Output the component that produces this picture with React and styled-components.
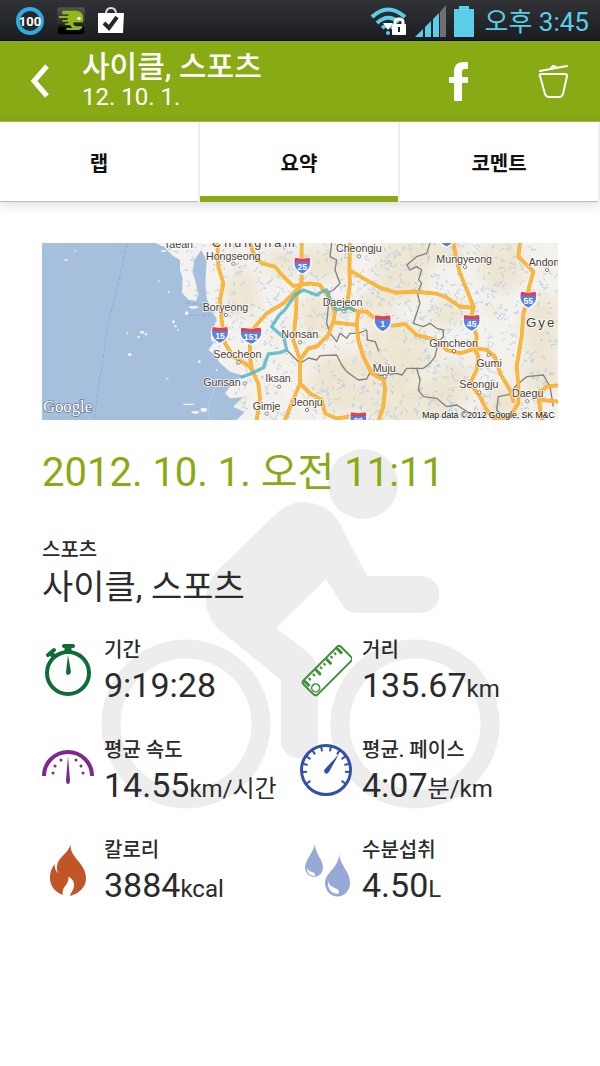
import React from "react";
import styled, { createGlobalStyle } from "styled-components";

const GREEN = "#88aa14";
const CYAN = "#5bcde8";

const GlobalStyle = createGlobalStyle`
  * {
    box-sizing: border-box;
  }
  body {
    margin: 0;
    background: #fff;
    color: #2b2b2b;
    font-family: Roboto, "Noto Sans CJK KR", sans-serif;
  }
  button {
    padding: 0;
    border: 0;
    background: none;
    font: inherit;
    color: inherit;
    cursor: pointer;
  }
  svg {
    display: block;
  }
`;

const StatusBar = styled.div`
  display: flex;
  align-items: center;
  justify-content: space-between;
  height: 41px;
  padding: 1px 11px 0 15px;
  background: linear-gradient(#303235, #1c1d22);
  border-bottom: 1px solid #0c0d0c;
`;

const StatusGroup = styled.div`
  display: flex;
  align-items: center;
  gap: ${(props) => props.$gap}px;
`;

const Clock = styled.span`
  margin-left: 4px;
  padding-top: 2px;
  color: ${CYAN};
  font-size: 26px;
  line-height: 36px;
`;

const Header = styled.header`
  display: flex;
  align-items: center;
  height: 81px;
  padding: 0 30px;
  background: ${GREEN};
  border-bottom: 1px solid #a9c254;
  color: #fff;
`;

const HeaderText = styled.div`
  flex: 1;
  margin-left: 32px;
  padding-bottom: 2px;
`;

const HeaderTitle = styled.h1`
  margin: 0;
  font-size: 30px;
  font-weight: 500;
  line-height: 34px;
`;

const HeaderDate = styled.div`
  font-size: 24px;
  line-height: 26px;
`;

const HeaderActions = styled.div`
  display: flex;
  align-items: center;
  gap: 66px;
`;

const Tabs = styled.nav`
  display: grid;
  grid-template-columns: repeat(3, 1fr);
  height: 80px;
  border-bottom: 1px solid #bdbdbd;
  box-shadow: 0 2px 12px rgba(0, 0, 0, 0.16);
`;

const Tab = styled.button`
  && {
    height: 80px;
    border-right: 2px solid #efefef;
    box-shadow: inset 0 -6px ${(props) => (props.$active ? GREEN : "transparent")};
    color: #111;
    font-size: 20px;
    font-weight: 700;
  }
`;

const Summary = styled.main`
  padding: 41px 42px 0;
`;

const Details = styled.section`
  position: relative;
  z-index: 0;
  padding-top: 28px;
`;

const Watermark = styled.svg`
  position: absolute;
  z-index: -1;
  top: 28px;
  left: 50%;
  width: 400px;
  margin-left: -200px;
`;

const StartTime = styled.h2`
  margin: 0;
  color: ${GREEN};
  font-size: 40px;
  font-weight: 400;
  line-height: 50px;
`;

const SportLabel = styled.div`
  margin-top: 38px;
  font-size: 20px;
  font-weight: 500;
  line-height: 28px;
`;

const SportName = styled.div`
  font-size: 34px;
  line-height: 46px;
`;

const Metrics = styled.div`
  display: grid;
  grid-template-columns: repeat(2, 1fr);
  grid-auto-rows: 100px;
  margin-top: 26px;
`;

const Metric = styled.div`
  display: grid;
  grid-template-columns: 52px 1fr;
  gap: 10px;
  align-items: start;
  white-space: nowrap;
`;

const MetricIcon = styled.svg`
  width: 52px;
  height: 64px;
`;

const MetricLabel = styled.div`
  font-size: 20px;
  font-weight: 500;
  line-height: 28px;
`;

const MetricValue = styled.div`
  font-size: 34px;
  line-height: 42px;
`;

const Unit = styled.span`
  font-size: 24px;
`;

const MapFrame = styled.svg`
  width: 100%;
  height: auto;
  background: #a5bfdd;

  text {
    font-family: "Liberation Sans", Arial, sans-serif;
  }
`;

const PlaceText = styled.text`
  fill: #4a4038;
  stroke: #fff;
  stroke-width: 5px;
  stroke-opacity: 0.8;
  paint-order: stroke;
  font-size: ${(props) => props.$size || 32}px;
  letter-spacing: ${(props) => props.$tracking || 0}px;
`;

const GoogleMark = styled.text`
  && {
    fill: #fff;
    stroke: #6c7f96;
    stroke-width: 5px;
    paint-order: stroke;
    font-family: "Liberation Serif", serif;
    font-size: 50px;
  }
`;

// label, label x, label y, marker x, marker y
const PLACES = [
  ["Taean", 366, 14],
  ["Hongseong", 492, 51, 574, 62],
  ["Boryeong", 482, 204, 552, 216],
  ["Seocheon", 514, 346, 590, 358],
  ["Gunsan", 484, 430, 608, 422],
  ["Nonsan", 718, 285, 774, 298],
  ["Iksan", 670, 418, 711, 431],
  ["Gimje", 632, 500, 674, 512],
  ["Jeonju", 748, 488, 795, 501],
  ["Daejeon", 842, 190, 905, 206],
  ["Cheongju", 882, 26, 951, 40],
  ["Mungyeong", 1183, 61, 1269, 72],
  ["Andon", 1460, 68, 1515, 81],
  ["Gimcheon", 1162, 311, 1236, 324],
  ["Gumi", 1303, 371, 1340, 336],
  ["Seongju", 1252, 436, 1312, 448],
  ["Muju", 992, 388, 1028, 400],
  ["Daegu", 1410, 461, 1456, 475],
];

const SHIELDS = [
  ["25", 781, 69],
  ["15", 534, 277],
  ["151", 627, 279],
  ["1", 1022, 242],
  ["45", 1289, 241],
  ["55", 1459, 171],
  ["20", 949, 533],
  ["", 1214, -12],
];

const ROADS = [
  "M526 0L529 71L544 121L534 171L539 231L549 301L574 341L624 371L649 421L654 466L644 531",
  "M624 0L634 31L659 61L699 71L724 101L754 129L804 121L834 126L859 161L879 206L874 238L944 246L949 206L924 196",
  "M779 0V121L764 151L762 211L754 291L774 351V421L749 481L729 531",
  "M764 141L724 181L674 211L639 251L624 281V341L629 376",
  "M872 240L859 276L824 311L799 316L774 351",
  "M924 0L922 81L924 121L914 196M922 81L964 106L1014 134L1064 149L1114 146L1184 152L1214 164L1254 191L1294 194",
  "M944 246L949 291L964 341L989 391L1026 412L1029 441L1024 491L1010 531",
  "M949 206L974 206L1004 231L1054 248L1089 243L1124 276L1184 291L1214 321L1254 331L1304 316L1334 321L1359 341L1374 391L1404 441L1414 475",
  "M774 421L804 451L839 471L849 511L884 526L924 521",
  "M1234 0L1244 51L1254 91L1279 151L1294 191L1289 221L1304 281L1299 321L1309 341L1304 381L1284 421L1314 461L1334 501L1360 531",
  "M1434 0L1429 41L1454 66L1474 86L1459 141L1454 181L1444 211L1439 281L1424 371L1429 421V481L1404 521L1370 531",
  "M1548 427L1514 431L1494 446L1490 470L1500 531M1490 470L1548 476",
];

const BORDERS = [
  "M869 0L864 41L884 51L879 81L894 121L874 141L854 151L859 191L854 241L864 271L884 296L894 271L914 286L924 271L949 271L974 261L976 291L1000 296L1010 325",
  "M734 321L774 361L800 345L824 351L834 338L884 336L899 366L914 386L949 411L974 408L984 388L1014 398L1064 391L1080 396L1094 376L1124 376",
  "M1164 0L1154 31L1124 41L1094 66L1104 81L1124 71L1139 81L1130 110L1139 121L1126 150L1134 181L1114 241L1144 251L1164 241L1184 256L1204 261L1204 281L1189 296L1179 341L1164 361L1144 376L1124 376L1134 411L1129 441L1144 461L1184 466L1214 491L1244 486L1284 511",
  "M1534 491L1524 431L1504 396L1454 401L1424 426L1400 455L1369 461L1364 501L1384 521",
];

const LAND =
  "M340 0L369 14L392 38L414 51L414 81L422 105L420 150L440 170L462 174L470 152L460 115L452 88L457 51L478 21L494 54L490 121L494 166L509 206L524 226L514 261L506 285L514 301L499 321L519 336L534 360L564 386L614 401L576 411L564 431L549 451L564 466L604 462L574 491L608 507L584 531H1548V0Z";

const HILLS = [
  [600, 150, 50, 70], [840, 60, 80, 50], [830, 220, 60, 60], [900, 420, 100, 90],
  [1080, 80, 80, 90], [1060, 330, 110, 90], [1100, 480, 140, 70], [1380, 60, 70, 90],
  [1500, 260, 60, 110], [1220, 210, 60, 40], [1230, 420, 60, 70], [1380, 480, 60, 50],
  [720, 60, 50, 40], [1180, 20, 90, 40], [1000, 190, 60, 50], [1500, 400, 60, 50],
];

const ISLANDS = [
  [70, 52, 6, 2], [74, 50, 3, 2], [100, 23, 3, 2], [220, 24, 3, 1], [365, 24, 8, 3],
  [256, 271, 3, 3], [300, 268, 7, 4], [312, 274, 5, 3], [290, 282, 4, 3], [263, 335, 6, 4],
  [394, 236, 4, 5], [400, 250, 5, 3], [434, 211, 5, 6], [455, 193, 14, 4], [472, 356, 4, 4],
  [376, 407, 5, 2], [524, 381, 3, 3], [440, 484, 18, 2], [460, 508, 12, 4], [485, 500, 10, 6],
  [380, 148, 3, 3], [350, 114, 3, 2], [408, 261, 3, 2], [304, 465, 3, 1],
];

// short broken streams scattered over the land
const makeStreams = () => {
  let seed = 37;
  const rand = () => {
    seed = (seed * 16807) % 2147483647;
    return seed / 2147483647;
  };
  let d = "";
  for (let i = 0; i < 1100; i++) {
    d += `M${Math.round(350 + rand() * 1198)} ${Math.round(rand() * 531)}`;
    const steps = 2 + Math.floor(rand() * 3);
    for (let k = 0; k < steps; k++) {
      d += `l${Math.round(rand() * 16 - 8)} ${Math.round(rand() * 16 - 8)}`;
    }
  }
  return d;
};
const STREAMS = makeStreams();

const RouteMap = () => (
  <MapFrame viewBox="0 0 1548 531" role="img" aria-label="Route map">
    <defs>
      <clipPath id="land">
        <path d={LAND} />
      </clipPath>
      <filter id="soft" x="-50%" y="-50%" width="200%" height="200%">
        <feGaussianBlur stdDeviation="18" />
      </filter>
      <filter id="relief" x="0" y="0" width="100%" height="100%">
        <feTurbulence type="fractalNoise" baseFrequency="0.018" numOctaves="4" seed="5" />
        <feColorMatrix values="0 0 0 0 0.88  0 0 0 0 0.84  0 0 0 0 0.7  2.2 0 0 0 -1.05" />
      </filter>
    </defs>
    <path d={LAND} fill="#f4f2ef" />
    <g clipPath="url(#land)">
      <g fill="#e8e0c6" fillOpacity="0.7" filter="url(#soft)">
        {HILLS.map(([x, y, rx, ry]) => (
          <ellipse key={`${x}-${y}`} cx={x} cy={y} rx={rx} ry={ry} />
        ))}
      </g>
      <rect x="560" width="988" height="531" filter="url(#relief)" />
      <path d={STREAMS} fill="none" stroke="#a9c6e8" strokeWidth="2" />
    </g>
    <g fill="#f3f2ee">
      {ISLANDS.map(([x, y, rx, ry]) => (
        <ellipse key={`${x}-${y}`} cx={x} cy={y} rx={rx} ry={ry} />
      ))}
    </g>
    <path
      d="M255 0L232 110L196 250L180 370L166 450L158 531M440 217H505M432 180L500 186"
      fill="none"
      stroke="#8b9fd4"
      strokeWidth="2"
      strokeDasharray="14 6"
    />
    <path d="M516 435L502 480L498 505L506 531" fill="none" stroke="#c5d5e8" strokeWidth="2" />
    <g fill="none" stroke="#85827c" strokeWidth="4" strokeLinejoin="round">
      {BORDERS.map((d) => (
        <path key={d} d={d} />
      ))}
    </g>
    <g fill="none" strokeLinejoin="round" strokeLinecap="round">
      <g stroke="#eda836" strokeWidth="11">
        {ROADS.map((d) => (
          <path key={d} d={d} />
        ))}
      </g>
      <g stroke="#fdb83c" strokeWidth="8">
        {ROADS.map((d) => (
          <path key={d} d={d} />
        ))}
      </g>
      <path
        d="M600 402L629 391L664 374L679 333L714 329L734 321L726 284L689 251L712 216L729 200L759 156L784 141L824 156L840 146L854 141L869 181L884 200L924 194L936 202"
        stroke="#4fb3c0"
        strokeOpacity="0.8"
        strokeWidth="10"
      />
    </g>
    {SHIELDS.map(([label, x, y]) => (
      <g key={`${x}-${y}`} transform={`translate(${x} ${y})`}>
        <path
          d={
            label === "151"
              ? "M-29 -25L0 -21L29 -25L33 -8Q30 14 0 25Q-30 14 -33 -8Z"
              : "M-22 -25L0 -21L22 -25L26 -8Q24 14 0 25Q-24 14 -26 -8Z"
          }
          fill="#5580e6"
          stroke="#fff"
          strokeWidth="4"
        />
        <path
          d={label === "151" ? "M-29 -25L0 -22L29 -25L31 -13H-31Z" : "M-22 -25L0 -22L22 -25L24 -13H-24Z"}
          fill="#e0414b"
        />
        <text y="11" textAnchor="middle" fill="#fff" fontSize="26" fontWeight="700">
          {label}
        </text>
      </g>
    ))}
    {PLACES.map(([name, x, y, cx, cy]) => (
      <g key={name}>
        {cx && <circle cx={cx} cy={cy} r="5" fill="#fff" stroke="#555" strokeWidth="2" />}
        <PlaceText x={x} y={y}>
          {name}
        </PlaceText>
      </g>
    ))}
    <PlaceText x="510" y="13" $size={38} $tracking={9}>
      Chungnam
    </PlaceText>
    <PlaceText x="1452" y="251" $size={40} $tracking={6}>
      Gye
    </PlaceText>
    <GoogleMark x="3" y="507">
      Google
    </GoogleMark>
    <text x="1141" y="526" fontSize="26" fill="#111" stroke="#fff" strokeOpacity="0.6" strokeWidth="4" paintOrder="stroke">
      Map data ©2012 Google, SK M&amp;C
    </text>
  </MapFrame>
);

const CyclistWatermark = () => (
  <Watermark viewBox="100 448 400 362" fill="#ededed" aria-hidden="true">
    <circle cx="363" cy="484" r="35" />
    <path d="M275 515Q288 502 303 502Q331 503 342 528L367 576H421A18 18 0 0 1 421 613H357Q346 613 341 603L326 579L276 628L306 651Q318 660 318 674V740A18 18 0 0 1 281 740V680L222 632Q206 619 206 600Q206 582 217 571Z" />
    <g fill="none" stroke="#ededed" strokeWidth="19">
      <circle cx="186" cy="724" r="75" />
      <circle cx="415" cy="724" r="75" />
    </g>
  </Watermark>
);

const StopwatchIcon = () => (
  <MetricIcon viewBox="0 0 52 64" aria-hidden="true">
    <g stroke="#0f6b37" fill="none">
      <circle cx="26" cy="37" r="21" fill="#fff" strokeWidth="4" />
      <path d="M26 11V16" strokeWidth="7" />
      <path d="M22 10H31" strokeWidth="4" strokeLinecap="round" />
      <path d="M6 19L12 14" strokeWidth="4" strokeLinecap="round" />
      <path d="M9 17L13 22" strokeWidth="5" />
    </g>
    <path d="M26 19L29 36Q28 39 26 39Q24 39 24 36Z" fill="#0f6b37" />
  </MetricIcon>
);

const RulerIcon = () => (
  <MetricIcon viewBox="0 0 52 64" aria-hidden="true">
    <g transform="translate(27 35) rotate(-45)" fill="none" stroke="#3f8f3c">
      <rect x="-26" y="-10" width="53" height="20" rx="3" fill="#fff" strokeWidth="2" />
      <circle cx="-20" cy="4" r="4" strokeWidth="1.500" />
      <path d="M-23 -8V-3M-7 -8V-3M8 -8V-3M23 -8V-3" strokeWidth="3" strokeLinecap="round" />
      <path d="M-18 -8V-5M-12 -8V-5M-2 -8V-5M3 -8V-5M13 -8V-5M18 -8V-5" strokeWidth="2" />
    </g>
  </MetricIcon>
);

const SpeedIcon = () => (
  <MetricIcon viewBox="0 0 52 64" aria-hidden="true">
    <path d="M2 40A24 24 0 0 1 50 40" fill="none" stroke="#7d2a8c" strokeWidth="4" />
    <path d="M26 20L28 44Q28 48 26 48Q24 48 24 44Z" fill="#7d2a8c" />
    <g fill="#7d2a8c">
      <circle cx="11" cy="37" r="1.500" />
      <circle cx="13" cy="30" r="1.500" />
      <circle cx="19" cy="24" r="1.500" />
      <circle cx="34" cy="24" r="1.500" />
      <circle cx="39" cy="30" r="1.500" />
      <circle cx="41" cy="37" r="1.500" />
    </g>
  </MetricIcon>
);

const PACE_TICKS = [-125, -95, -75, -55, -35, -12, 12, 35, 55, 75, 95, 125];

const PaceIcon = () => (
  <MetricIcon viewBox="0 0 52 64" aria-hidden="true">
    <g transform="translate(26 34)">
      <circle r="24.500" fill="#fff" stroke="#3450a4" strokeWidth="3" />
      <g stroke="#3450a4" strokeWidth="2">
        {PACE_TICKS.map((angle) => (
          <path key={angle} d="M0 -24V-19" transform={`rotate(${angle})`} />
        ))}
      </g>
      <path d="M13 -16L3 2Q1 5 -1 3Q-3 1 -1 -1Z" fill="#3450a4" />
    </g>
  </MetricIcon>
);

const FlameIcon = () => (
  <MetricIcon viewBox="0 0 52 64" aria-hidden="true">
    <path
      d="M29 8C26 20 44 27 44 42C44 51 38 57 28 60C29 56 32 54 32 49C32 45 30 42 26 41C28 46 22 50 21 54Q20 57 21 59C13 56 8 50 8 42C8 36 10 31 13 28C12 32 14 35 16 37C11 23 25 20 29 8Z"
      fill="#c05528"
    />
  </MetricIcon>
);

const DropsIcon = () => (
  <MetricIcon viewBox="0 0 52 64" aria-hidden="true">
    <path d="M15 8C15 18 23 23 23 32A9 9 0 0 1 5 32C5 24 13 17 15 8Z" fill="#97a7d6" />
    <path d="M7 32Q7 40 15 40Q16 37 12 36Q9 35 7 32Z" fill="#fff" />
    <path d="M39 15C39 30 50 34 50 47A12 13 0 0 1 25 47C25 36 41 31 39 15Z" fill="#97a7d6" />
    <path d="M28 45Q27 57 38 58Q41 54 35 52Q29 50 28 45Z" fill="#fff" />
  </MetricIcon>
);

const METRICS = [
  { Icon: StopwatchIcon, label: "기간", value: "9:19:28" },
  { Icon: RulerIcon, label: "거리", value: "135.67", unit: "km" },
  { Icon: SpeedIcon, label: "평균 속도", value: "14.55", unit: "km/시간" },
  { Icon: PaceIcon, label: "평균. 페이스", value: "4:07", unit: "분/km" },
  { Icon: FlameIcon, label: "칼로리", value: "3884", unit: "kcal" },
  { Icon: DropsIcon, label: "수분섭취", value: "4.50", unit: "L" },
];

const TABS = ["랩", "요약", "코멘트"];

const BatteryBadge = () => (
  <svg width="30" height="30" viewBox="0 0 30 30" aria-hidden="true">
    <circle cx="15" cy="15" r="12" fill="#24282c" stroke="#2fabe0" strokeWidth="4" />
    <text
      x="15"
      y="20"
      textAnchor="middle"
      fill="#fff"
      fontFamily="Roboto, sans-serif"
      fontSize="13"
      fontWeight="700"
    >
      100
    </text>
  </svg>
);

const RunnerBadge = () => (
  <svg width="28" height="28" viewBox="0 0 84 84" aria-hidden="true">
    <defs>
      <linearGradient id="badge" x2="0" y2="1">
        <stop stopColor="#555" />
        <stop offset="0.6" stopColor="#2a2a2a" />
        <stop offset="0.8" stopColor="#000" />
      </linearGradient>
    </defs>
    <rect x="1" y="1" width="82" height="82" rx="8" fill="url(#badge)" stroke="#4a4a4a" />
    <path
      d="M16 11H58Q79 13 79 34Q79 42 77 46H52Q46 48 50 54Q54 58 60 58H76Q74 70 62 69H28V63H46Q40 58 40 54H24V49H34V44H16V39H32V33H6V27H34V22H16Z"
      fill="#93b81a"
    />
    <circle cx="66" cy="34" r="5" fill="#fff" />
  </svg>
);

const BagBadge = () => (
  <svg width="28" height="30" viewBox="0 0 28 30" aria-hidden="true">
    <path d="M9 8Q9 2 14 2Q19 2 19 8" fill="none" stroke="#ddd" strokeWidth="2" />
    <path d="M1 7H27L26 27H1Z" fill="#fff" />
    <path d="M7 17L12 22L20 11" fill="none" stroke="#25272b" strokeWidth="4" />
  </svg>
);

const WifiStatus = () => (
  <svg width="38" height="30" viewBox="0 0 38 30" aria-hidden="true">
    <g fill="none" stroke={CYAN} strokeWidth="4">
      <path d="M2 11Q18 -4 35 11" />
      <path d="M7 17Q18 7 29 16" />
      <path d="M12 22Q18 17 23 22" />
    </g>
    <circle cx="18" cy="27" r="2" fill={CYAN} />
    <path d="M13 17H23L18 24Z" fill="#fff" />
    <path d="M25 19V16Q25 13 29 13Q33 13 33 16V19" fill="none" stroke="#fff" strokeWidth="3" />
    <rect x="22" y="18" width="14" height="11" rx="1" fill="#fff" />
    <path d="M29 21V26" stroke="#222" strokeWidth="2" />
  </svg>
);

const SignalStatus = () => (
  <svg width="32" height="32" viewBox="0 0 32 32" aria-hidden="true">
    <path d="M0 32L8 24V32ZM10 22L16 16V32H10ZM18 14L24 8V32H18Z" fill={CYAN} />
    <path d="M25 7L31 0V32H25Z" fill="#6f6f6f" />
  </svg>
);

const BatteryStatus = () => (
  <svg width="20" height="32" viewBox="0 0 20 32" aria-hidden="true">
    <path d="M5 1H15V4H20V32H0V4H5Z" fill={CYAN} />
  </svg>
);

const App = () => {
  const [active, setActive] = React.useState("요약");
  return (
    <>
      <GlobalStyle />
      <StatusBar>
        <StatusGroup $gap={12}>
          <BatteryBadge />
          <RunnerBadge />
          <BagBadge />
        </StatusGroup>
        <StatusGroup $gap={7}>
          <WifiStatus />
          <SignalStatus />
          <BatteryStatus />
          <Clock>오후 3:45</Clock>
        </StatusGroup>
      </StatusBar>
      <Header>
        <button type="button" aria-label="Back">
          <svg width="20" height="36" viewBox="0 0 20 36">
            <path d="M17 3L4 18L17 33" fill="none" stroke="#fff" strokeWidth="5" />
          </svg>
        </button>
        <HeaderText>
          <HeaderTitle>사이클, 스포츠</HeaderTitle>
          <HeaderDate>12. 10. 1.</HeaderDate>
        </HeaderText>
        <HeaderActions>
          <button type="button" aria-label="Facebook">
            <svg width="22" height="40" viewBox="0 0 22 40">
              <path d="M1 16H6V11Q6 1 15 1H20V8H17Q14 8 14 11V16H20V22H14V40H6V22H1Z" fill="#fff" />
            </svg>
          </button>
          <button type="button" aria-label="Delete">
            <svg width="34" height="36" viewBox="0 0 34 36">
              <g fill="none" stroke="#fff" strokeWidth="2" strokeLinecap="round" strokeLinejoin="round">
                <path d="M4 8L31 3M15 5L17 3L20 4" />
                <path d="M5 11H29Q31 11 31 13L27 31Q26 34 23 34H13Q10 34 9 31L4 13Q3 11 5 11Z" />
              </g>
            </svg>
          </button>
        </HeaderActions>
      </Header>
      <Tabs>
        {TABS.map((tab) => (
          <Tab key={tab} type="button" $active={tab === active} onClick={() => setActive(tab)}>
            {tab}
          </Tab>
        ))}
      </Tabs>
      <Summary>
        <RouteMap />
        <Details>
          <CyclistWatermark />
          <StartTime>2012. 10. 1. 오전 11:11</StartTime>
          <SportLabel>스포츠</SportLabel>
          <SportName>사이클, 스포츠</SportName>
          <Metrics>
            {METRICS.map(({ Icon, label, value, unit }) => (
              <Metric key={label}>
                <Icon />
                <div>
                  <MetricLabel>{label}</MetricLabel>
                  <MetricValue>
                    {value}
                    {unit && <Unit>{unit}</Unit>}
                  </MetricValue>
                </div>
              </Metric>
            ))}
          </Metrics>
        </Details>
      </Summary>
    </>
  );
};

export default App;
